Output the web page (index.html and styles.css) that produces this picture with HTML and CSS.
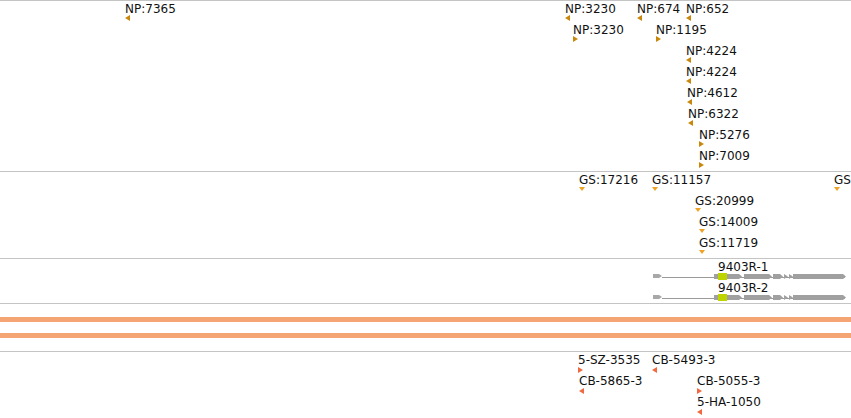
FILE: index.html
```html
<!DOCTYPE html>
<html lang="en">
<head>
    <meta charset="UTF-8">
    <title>Track view</title>
    <link rel="stylesheet" href="styles.css">
</head>
<body>
    <div class="tracks">
        <!-- NP features -->
        <div class="track track-np">
            <div class="feature" style="left:125px; top:1px"><span class="label">NP:7365</span><i class="arrow left"></i></div>
            <div class="feature" style="left:565px; top:1px"><span class="label">NP:3230</span><i class="arrow left"></i></div>
            <div class="feature" style="left:637px; top:1px"><span class="label">NP:674</span><i class="arrow left"></i></div>
            <div class="feature" style="left:686px; top:1px"><span class="label">NP:652</span><i class="arrow left"></i></div>
            <div class="feature" style="left:573px; top:22px"><span class="label">NP:3230</span><i class="arrow right"></i></div>
            <div class="feature" style="left:656px; top:22px"><span class="label">NP:1195</span><i class="arrow right"></i></div>
            <div class="feature" style="left:686px; top:43px"><span class="label">NP:4224</span><i class="arrow left"></i></div>
            <div class="feature" style="left:686px; top:64px"><span class="label">NP:4224</span><i class="arrow left"></i></div>
            <div class="feature" style="left:687px; top:85px"><span class="label">NP:4612</span><i class="arrow left"></i></div>
            <div class="feature" style="left:688px; top:106px"><span class="label">NP:6322</span><i class="arrow left"></i></div>
            <div class="feature" style="left:699px; top:127px"><span class="label">NP:5276</span><i class="arrow right"></i></div>
            <div class="feature" style="left:699px; top:148px"><span class="label">NP:7009</span><i class="arrow right"></i></div>
        </div>

        <!-- GS features -->
        <div class="track track-gs">
            <div class="feature" style="left:579px; top:1px"><span class="label">GS:17216</span><i class="arrow down"></i></div>
            <div class="feature" style="left:652px; top:1px"><span class="label">GS:11157</span><i class="arrow down"></i></div>
            <div class="feature" style="left:834px; top:1px"><span class="label">GS:</span><i class="arrow down"></i></div>
            <div class="feature" style="left:695px; top:22px"><span class="label">GS:20999</span><i class="arrow down"></i></div>
            <div class="feature" style="left:699px; top:43px"><span class="label">GS:14009</span><i class="arrow down"></i></div>
            <div class="feature" style="left:699px; top:64px"><span class="label">GS:11719</span><i class="arrow down"></i></div>
        </div>

        <!-- transcripts -->
        <div class="track track-genes">
            <div class="feature" style="left:718px; top:1px"><span class="label">9403R-1</span></div>
            <svg class="gene" style="left:653px; top:13px" width="195" height="10" viewBox="0 0 195 10">
                <line x1="9" y1="5.5" x2="192" y2="5.5" class="intron"/>
                <polygon class="utr" points="0,2 6,2 9,4 6,6 0,6"/>
                <rect class="exon" x="61" y="2" width="4" height="5"/>
                <rect class="cds" x="65" y="1" width="9" height="7"/>
                <polygon class="exon" points="74,2 86,2 89,4.5 86,7 74,7"/>
                <polygon class="exon" points="91,2 116,2 119,4.5 116,7 91,7"/>
                <polygon class="exon" points="120,2 127,2 130,4.5 127,7 120,7"/>
                <polygon class="exon" points="131,2 135,4.5 131,7"/>
                <polygon class="exon" points="136,2 140,4.5 136,7"/>
                <polygon class="exon" points="140,2 190,2 193,4.5 190,7 140,7"/>
            </svg>
            <div class="feature" style="left:718px; top:22px"><span class="label">9403R-2</span></div>
            <svg class="gene" style="left:653px; top:34px" width="195" height="10" viewBox="0 0 195 10">
                <line x1="9" y1="5.5" x2="192" y2="5.5" class="intron"/>
                <polygon class="utr" points="0,2 6,2 9,4 6,6 0,6"/>
                <rect class="exon" x="61" y="2" width="4" height="5"/>
                <rect class="cds" x="65" y="1" width="9" height="7"/>
                <polygon class="exon" points="74,2 86,2 89,4.5 86,7 74,7"/>
                <polygon class="exon" points="91,2 116,2 119,4.5 116,7 91,7"/>
                <polygon class="exon" points="120,2 127,2 130,4.5 127,7 120,7"/>
                <polygon class="exon" points="131,2 135,4.5 131,7"/>
                <polygon class="exon" points="136,2 140,4.5 136,7"/>
                <polygon class="exon" points="140,2 190,2 193,4.5 190,7 140,7"/>
            </svg>
        </div>

        <!-- sequence strands -->
        <div class="track track-sequence">
            <div class="strand"></div>
            <div class="strand"></div>
        </div>

        <!-- CB features -->
        <div class="track track-cb">
            <div class="feature" style="left:578px; top:1px"><span class="label">5-SZ-3535</span><i class="arrow right"></i></div>
            <div class="feature" style="left:652px; top:1px"><span class="label">CB-5493-3</span><i class="arrow left"></i></div>
            <div class="feature" style="left:579px; top:22px"><span class="label">CB-5865-3</span><i class="arrow left"></i></div>
            <div class="feature" style="left:697px; top:22px"><span class="label">CB-5055-3</span><i class="arrow right"></i></div>
            <div class="feature" style="left:697px; top:43px"><span class="label">5-HA-1050</span><i class="arrow left"></i></div>
        </div>
    </div>
</body>
</html>
```

FILE: styles.css
```css
/* page */
body {
    margin: 0;
    font-family: "DejaVu Sans", sans-serif;
    font-size: 12px;
    color: #111;
    background: #fff;
    overflow: hidden;
}

.tracks {
    display: flex;
    flex-direction: column;
    width: 851px;
    height: 418px;
}

/* each track is a horizontal band with a grey rule on top */
.track {
    position: relative;
    box-sizing: border-box;
    border-top: 1px solid #c4c4c4;
    overflow: hidden;
    flex: none;
}

.track-np { height: 171px; }
.track-gs { height: 87px; }
.track-genes { height: 45px; }
.track-cb { flex: 1; }

.track-sequence {
    height: 48px;
    display: flex;
    flex-direction: column;
    gap: 11px;
    padding-top: 13px;
}

.strand {
    height: 5px;
    background: #f5a573;
}

/* feature label with strand marker underneath */
.feature {
    position: absolute;
    display: flex;
    flex-direction: column;
    align-items: flex-start;
    white-space: nowrap;
}

.label {
    line-height: 14px;
}

.arrow {
    width: 0;
    height: 0;
    border-style: solid;
    border-color: transparent;
}

.arrow.left {
    border-width: 3px 5px 3px 0;
}

.arrow.right {
    border-width: 3px 0 3px 5px;
}

.arrow.down {
    border-width: 4px 3px 0 3px;
}

.track-np .arrow { margin-top: -1px; }
.track-np .arrow.left { border-right-color: #c9880c; }
.track-np .arrow.right { border-left-color: #c9880c; }
.track-gs .arrow.down { border-top-color: #f0a224; }
.track-cb .arrow.left { border-right-color: #f2683f; }
.track-cb .arrow.right { border-left-color: #f2683f; }

/* transcript glyphs */
.gene {
    position: absolute;
    display: block;
}

.gene .intron {
    stroke: #9a9a9a;
    stroke-width: 1;
}

.gene .utr { fill: #a8a8a8; }
.gene .exon { fill: #a0a0a0; }
.gene .cds { fill: #bed400; }
```
